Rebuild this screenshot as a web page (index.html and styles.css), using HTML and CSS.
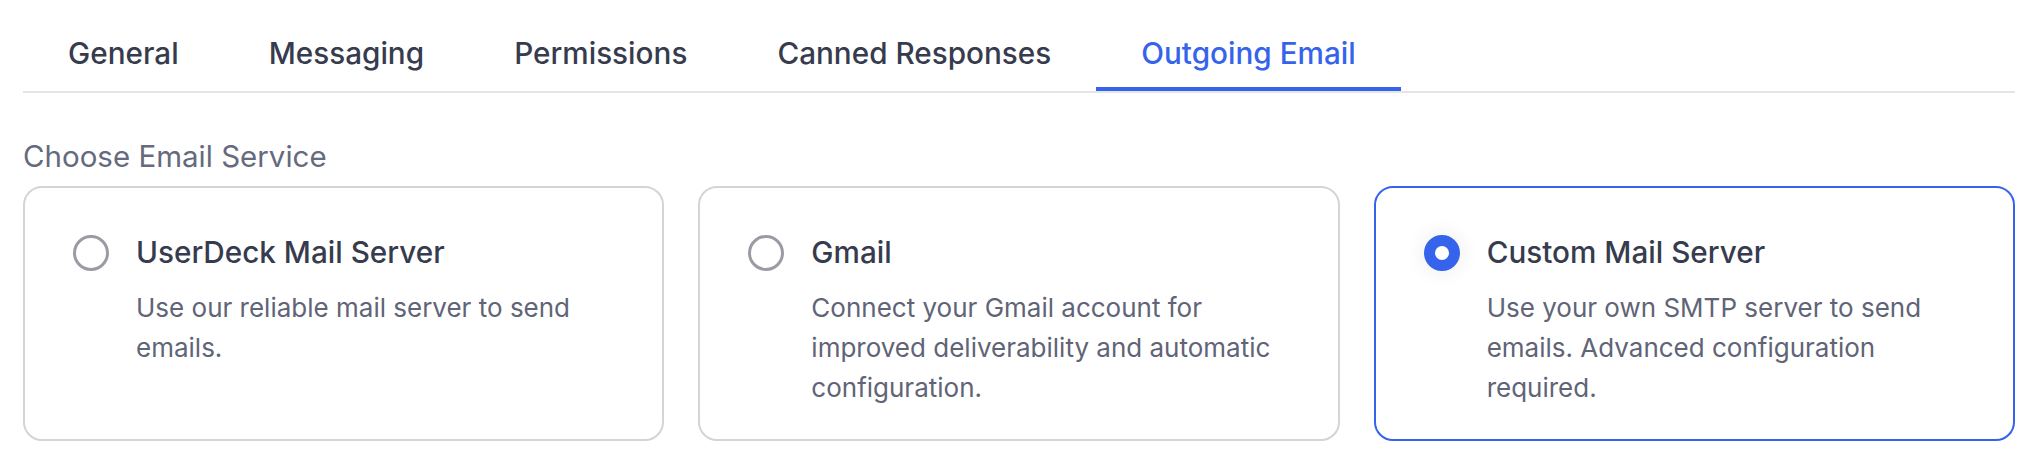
FILE: index.html
```html
<!DOCTYPE html>
<html lang="en">
<head>
<meta charset="utf-8">
<title>Outgoing Email</title>
<link rel="stylesheet" href="styles.css">
</head>
<body>
<div class="page">
  <nav class="tabs">
    <a class="tab">General</a>
    <a class="tab">Messaging</a>
    <a class="tab">Permissions</a>
    <a class="tab">Canned Responses</a>
    <a class="tab tab-active">Outgoing Email</a>
  </nav>

  <div class="section-label">Choose Email Service</div>

  <div class="options">
    <label class="option">
      <div class="option-head">
        <span class="radio"></span>
        <span class="option-title">UserDeck Mail Server</span>
      </div>
      <p class="option-desc">Use our reliable mail server to send emails.</p>
    </label>
    <label class="option">
      <div class="option-head">
        <span class="radio"></span>
        <span class="option-title">Gmail</span>
      </div>
      <p class="option-desc">Connect your Gmail account for improved deliverability and automatic configuration.</p>
    </label>
    <label class="option option-selected">
      <div class="option-head">
        <span class="radio radio-checked"></span>
        <span class="option-title">Custom Mail Server</span>
      </div>
      <p class="option-desc">Use your own SMTP server to send emails. Advanced configuration required.</p>
    </label>
  </div>
</div>
</body>
</html>
```
FILE: styles.css
```css
* { box-sizing: border-box; }

html, body {
  margin: 0;
  padding: 0;
  background: #ffffff;
}

body {
  font-family: Inter, "Noto Sans", sans-serif;
  color: #363b4e;
}

.page {
  padding: 0 21px 0 23px;
}

.tabs {
  display: flex;
  border-bottom: 2px solid #e5e5e7;
}

.tab {
  padding: 31px 45px 10.5px;
  border-bottom: 4px solid transparent;
  font-size: 29.7px;
  line-height: 45.5px;
  font-weight: 480;
  color: #363b4e;
  white-space: nowrap;
}

.tab-active {
  color: #3563eb;
  border-bottom-color: #3563eb;
}

.section-label {
  margin-top: 41px;
  font-size: 29.5px;
  line-height: 45.5px;
  font-weight: 400;
  color: #656a7d;
}

.options {
  margin-top: 6.5px;
  display: grid;
  grid-template-columns: repeat(3, 1fr);
  gap: 34px;
}

.option {
  display: block;
  border: 2px solid #d4d4d8;
  border-radius: 19px;
  padding: 42px 48px 31.5px;
  background: #ffffff;
}

.option-selected {
  border-color: #3563eb;
}

.option-head {
  display: flex;
  align-items: center;
  gap: 27px;
}

.radio {
  flex: none;
  width: 36px;
  height: 36px;
  border-radius: 50%;
  border: 3px solid #9a9ba5;
  background: #ffffff;
}

.radio-checked {
  border: 11px solid #3563eb;
  box-shadow: 0 0 14px 8px rgba(0, 0, 0, 0.035);
}

.option-title {
  font-size: 29.7px;
  line-height: 45.5px;
  font-weight: 480;
  color: #363b4e;
}

.option-desc {
  margin: 12px 0 0 63px;
  font-size: 26px;
  line-height: 40px;
  font-weight: 400;
  color: #5f6477;
}
```
